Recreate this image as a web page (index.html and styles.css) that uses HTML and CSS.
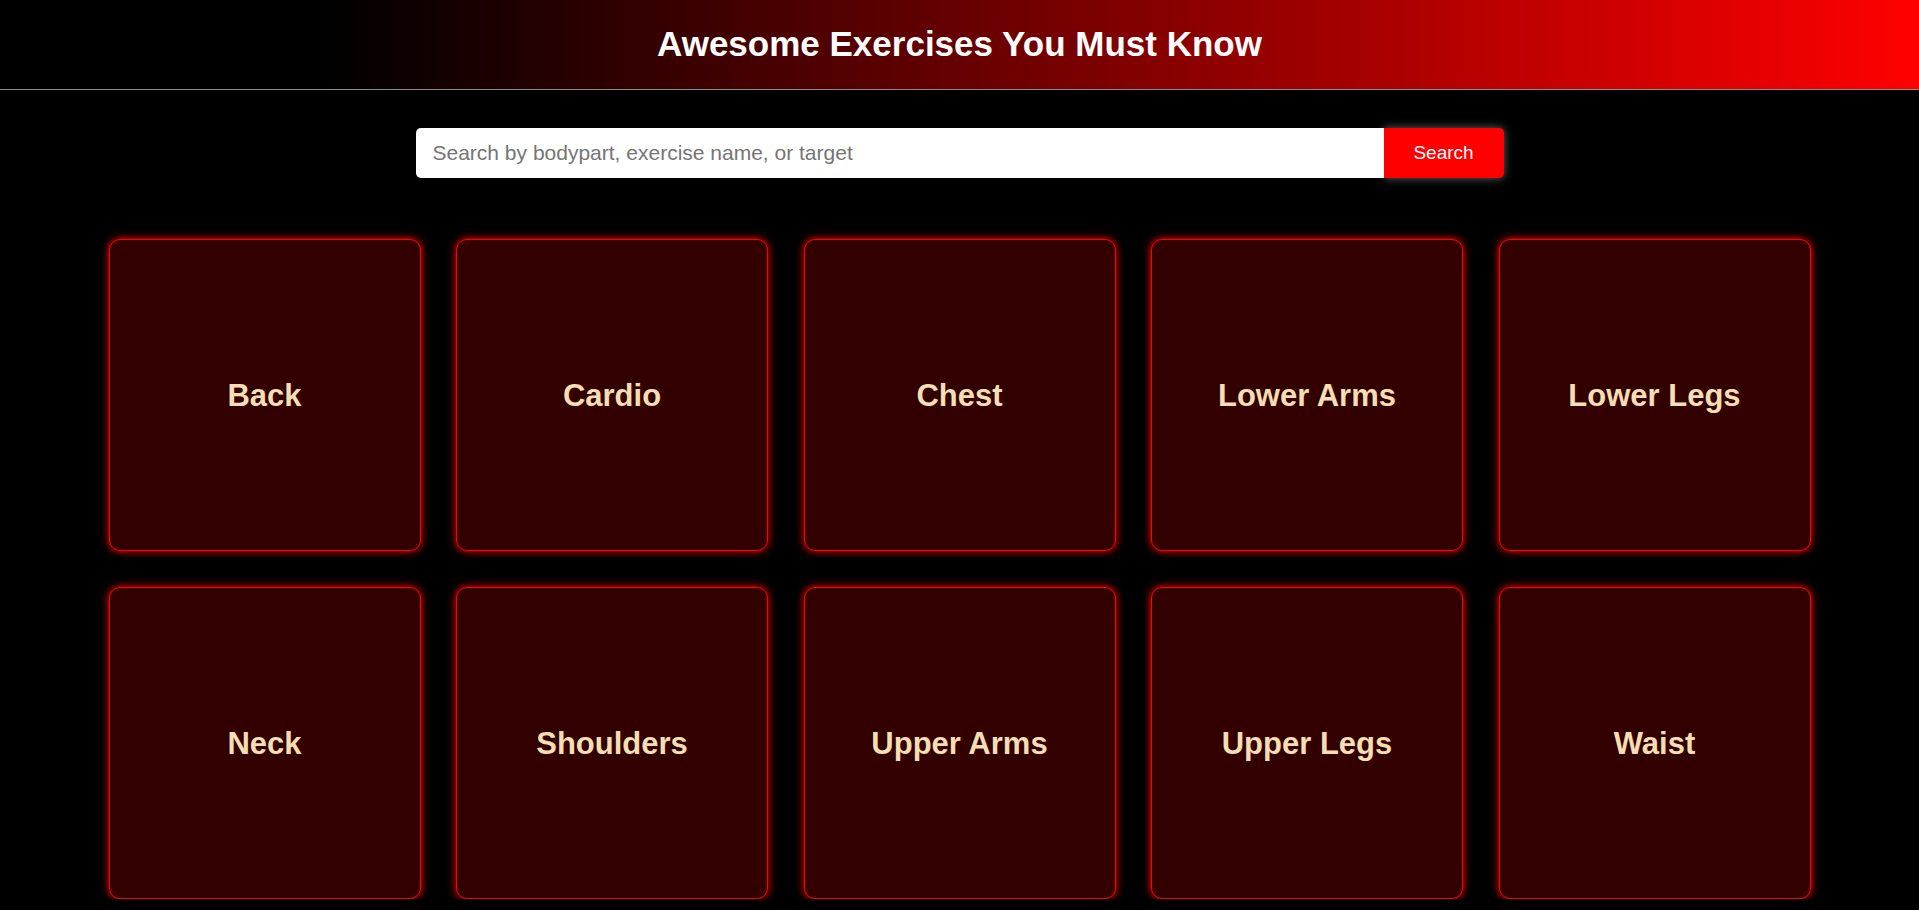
FILE: index.html
```html
<!DOCTYPE html>
<html lang="en">
<head>
<meta charset="utf-8">
<title>Awesome Exercises You Must Know</title>
<link rel="stylesheet" href="styles.css">
</head>
<body>
<header class="header">
  <h1 class="title">Awesome Exercises You Must Know</h1>
</header>
<main class="main">
  <form class="search">
    <input class="search-input" type="text" placeholder="Search by bodypart, exercise name, or target">
    <button class="search-btn" type="button">Search</button>
  </form>
  <section class="grid">
    <div class="card"><h2 class="card-title">Back</h2></div>
    <div class="card"><h2 class="card-title">Cardio</h2></div>
    <div class="card"><h2 class="card-title">Chest</h2></div>
    <div class="card"><h2 class="card-title">Lower Arms</h2></div>
    <div class="card"><h2 class="card-title">Lower Legs</h2></div>
    <div class="card"><h2 class="card-title">Neck</h2></div>
    <div class="card"><h2 class="card-title">Shoulders</h2></div>
    <div class="card"><h2 class="card-title">Upper Arms</h2></div>
    <div class="card"><h2 class="card-title">Upper Legs</h2></div>
    <div class="card"><h2 class="card-title">Waist</h2></div>
  </section>
</main>
</body>
</html>
```
FILE: styles.css
```css
* { box-sizing: border-box; }
html, body {
  margin: 0;
  padding: 0;
  background: #000;
  font-family: "Liberation Sans", Arial, sans-serif;
}
.header {
  height: 90px;
  border-bottom: 1px solid #8a8a8a;
  background: linear-gradient(to right, #000 16.7%, #f00 100%);
  display: flex;
  align-items: center;
  justify-content: center;
}
.title {
  margin: 0;
  color: #fff;
  font-size: 35px;
  font-weight: bold;
  position: relative;
  top: -1px;
}
.main {
  display: flex;
  flex-direction: column;
  align-items: center;
}
.search {
  margin-top: 38px;
  display: flex;
  width: 1088px;
  height: 50px;
}
.search-input {
  flex: 1;
  height: 100%;
  border: none;
  outline: none;
  border-radius: 5px 0 0 5px;
  padding: 0 17px;
  font-family: "Liberation Sans", Arial, sans-serif;
  font-size: 21px;
  color: #333;
  background: #fff;
}
.search-input::placeholder { color: #757575; }
.search-btn {
  width: 120px;
  height: 100%;
  border: none;
  border-radius: 0 5px 5px 0;
  background: #f00;
  color: #fff;
  font-family: "Liberation Sans", Arial, sans-serif;
  font-size: 19px;
  box-shadow: 0 0 10px rgba(255, 255, 255, 0.4);
  cursor: pointer;
}
.grid {
  margin-top: 61px;
  display: grid;
  grid-template-columns: repeat(5, 312px);
  grid-auto-rows: 312px;
  gap: 35.5px;
}
.card {
  background: #330000;
  border: 1px solid #f00;
  border-radius: 11px;
  box-shadow: 0 0 9px #f00;
  display: flex;
  align-items: center;
  justify-content: center;
  padding-top: 2px;
}
.card-title {
  margin: 0;
  color: #f5deb3;
  font-size: 31px;
  font-weight: bold;
}
```
